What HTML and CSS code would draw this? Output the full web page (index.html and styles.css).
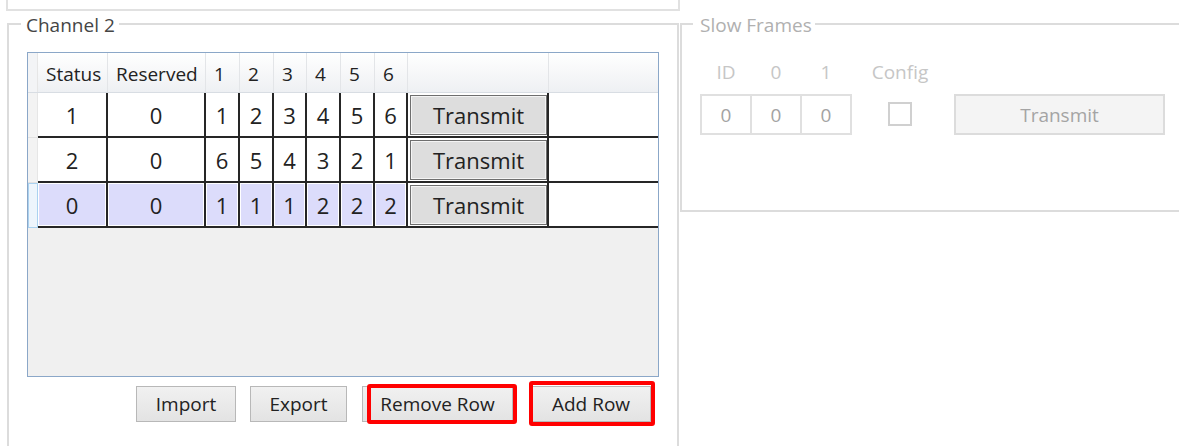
FILE: index.html
```html
<!DOCTYPE html>
<html lang="en">
<head>
<meta charset="utf-8">
<title>Channel 2</title>
<link rel="stylesheet" href="styles.css">
</head>
<body>
<div class="window">
  <div class="top-panel"></div>
  <div class="groups">
    <fieldset class="group channel-group">
      <legend>Channel 2</legend>
      <div class="frame-grid">
        <div class="row head">
          <div class="rh"></div>
          <div class="hc">Status</div>
          <div class="hc">Reserved</div>
          <div class="hc">1</div>
          <div class="hc">2</div>
          <div class="hc">3</div>
          <div class="hc">4</div>
          <div class="hc">5</div>
          <div class="hc">6</div>
          <div class="hc"></div>
          <div class="hc last"></div>
        </div>
        <div class="row data">
          <div class="rh"></div>
          <div class="dc">1</div>
          <div class="dc">0</div>
          <div class="dc">1</div>
          <div class="dc">2</div>
          <div class="dc">3</div>
          <div class="dc">4</div>
          <div class="dc">5</div>
          <div class="dc">6</div>
          <div class="dc btn-cell"><button class="grid-btn">Transmit</button></div>
          <div class="dc filler"></div>
        </div>
        <div class="row data">
          <div class="rh"></div>
          <div class="dc">2</div>
          <div class="dc">0</div>
          <div class="dc">6</div>
          <div class="dc">5</div>
          <div class="dc">4</div>
          <div class="dc">3</div>
          <div class="dc">2</div>
          <div class="dc">1</div>
          <div class="dc btn-cell"><button class="grid-btn">Transmit</button></div>
          <div class="dc filler"></div>
        </div>
        <div class="row data selected">
          <div class="rh"></div>
          <div class="dc">0</div>
          <div class="dc">0</div>
          <div class="dc">1</div>
          <div class="dc">1</div>
          <div class="dc">1</div>
          <div class="dc">2</div>
          <div class="dc">2</div>
          <div class="dc">2</div>
          <div class="dc btn-cell"><button class="grid-btn">Transmit</button></div>
          <div class="dc filler"></div>
        </div>
      </div>
      <div class="actions">
        <button class="btn btn-import">Import</button>
        <button class="btn btn-export">Export</button>
        <span class="mark mark-remove"><button class="btn btn-remove">Remove Row</button></span>
        <span class="mark mark-add"><button class="btn btn-add">Add Row</button></span>
      </div>
    </fieldset>

    <fieldset class="group slow-group">
      <legend>Slow Frames</legend>
      <div class="slow-row">
        <div class="field">
          <span class="field-label">ID</span>
          <span class="field-box">0</span>
        </div>
        <div class="field">
          <span class="field-label">0</span>
          <span class="field-box">0</span>
        </div>
        <div class="field">
          <span class="field-label">1</span>
          <span class="field-box">0</span>
        </div>
        <div class="field config">
          <span class="field-label">Config</span>
          <span class="check"></span>
        </div>
        <button class="slow-transmit" disabled>Transmit</button>
      </div>
    </fieldset>
  </div>
</div>
</body>
</html>
```

FILE: styles.css
```css
html, body {
  margin: 0;
  padding: 0;
  background: #ffffff;
  overflow: hidden;
}

body {
  width: 1179px;
  height: 446px;
  font-family: "Open Sans", "Noto Sans", sans-serif;
  font-size: 19px;
  color: #222222;
}

button {
  font-family: "Open Sans", "Noto Sans", sans-serif;
}

/* strip of the panel above the groups */
.top-panel {
  margin-left: 6px;
  width: 670px;
  height: 9px;
  border: 2px solid #e1e1e1;
  border-top: none;
}

.groups {
  display: flex;
  align-items: flex-start;
  margin-top: -2px;
  padding-left: 7px;
}

.group {
  margin: 0;
  min-width: 0;
  flex-shrink: 0;
  box-sizing: border-box;
  border: 2px solid #dcdcdc;
}

.group legend {
  font-size: 19px;
  line-height: 25px;
  padding-top: 4px;
}

/* Channel 2 group */
.channel-group {
  width: 672px;
  padding: 14px 0 40px 18px;
}

.channel-group legend {
  padding-left: 5px;
  padding-right: 4px;
  margin-left: -6px;
  color: #454545;
}

.frame-grid {
  width: 632px;
  height: 325px;
  box-sizing: border-box;
  border: 1px solid #8ba7c8;
  background: #f0f0f0;
}

.row {
  display: grid;
  grid-template-columns: 10px 70px 98px 34px 34px 33px 34px 34px 33px 141px 1fr;
}

.row.head {
  height: 40px;
  box-sizing: border-box;
  background: linear-gradient(#ffffff, #eef0f3);
  border-bottom: 1px solid #d8dde3;
}

.hc {
  display: flex;
  align-items: center;
  padding: 3px 0 0 8px;
  border-right: 1px solid #e3e5e8;
  white-space: nowrap;
  font-size: 19px;
  color: #222222;
}

.hc.last {
  border-right: none;
}

.row.head .rh {
  background: #f3f4f6;
  border-bottom: none;
}

.row.data {
  height: 45px;
}

.rh {
  box-sizing: border-box;
  background: #f3f3f3;
  border-right: 1px solid #e6e6e6;
  border-bottom: 1px solid #e2e2e2;
}

.dc {
  display: flex;
  align-items: center;
  justify-content: center;
  box-sizing: border-box;
  background: #ffffff;
  border-right: 2px solid #262626;
  border-bottom: 2px solid #262626;
  font-size: 22px;
  color: #222222;
}

.dc.filler {
  border-right: none;
}

.dc.btn-cell {
  padding: 2px 0 1px 2px;
  align-items: stretch;
  justify-content: stretch;
}

.grid-btn {
  width: 100%;
  padding: 0;
  border: 1px solid #6e6e6e;
  box-shadow: inset 0 0 0 1px #f4f4f4;
  background: #dddddd;
  font-size: 22px;
  color: #222222;
}

.row.selected .dc:not(.btn-cell):not(.filler) {
  background: #dcdcfb;
  box-shadow: inset 0 0 0 1px #ffffff;
}

.row.selected .rh {
  background: #edf5fc;
  border: 1px solid #aad2f0;
}

/* buttons under the grid */
.actions {
  display: flex;
  margin-top: 9px;
  padding-left: 109px;
}

.btn {
  height: 36px;
  padding: 0;
  box-sizing: border-box;
  border: 1px solid #b8b8b8;
  background: linear-gradient(#f1f1f1, #e3e3e3);
  font-size: 19px;
  color: #222222;
}

.btn-import { width: 100px; }
.btn-export { width: 97px; margin-left: 14px; }
.btn-remove { width: 151px; }
.btn-add { width: 120px; }

.mark {
  position: relative;
  display: flex;
}

.mark-remove { margin-left: 15px; }
.mark-add { margin-left: 18px; }

.mark::after {
  content: "";
  position: absolute;
  border: 4px solid #ff0000;
  border-radius: 3px;
}

.mark-remove::after {
  left: 5px;
  right: -4px;
  top: -2px;
  bottom: -2px;
}

.mark-add::after {
  left: -2px;
  right: -4px;
  top: -5px;
  bottom: -4px;
}

/* Slow Frames group (disabled) */
.slow-group {
  margin-left: 1px;
  width: 540px;
  height: 203px;
  padding: 22px 0 0 18px;
}

.slow-group legend {
  padding-left: 7px;
  padding-right: 3px;
  margin-left: -7px;
  color: #b0b0b0;
}

.slow-row {
  display: flex;
  align-items: flex-end;
}

.field {
  display: flex;
  flex-direction: column;
  align-items: center;
  width: 52px;
}

.field + .field {
  margin-left: -2px;
}

.field-label {
  height: 25px;
  line-height: 25px;
  margin-bottom: 9px;
  font-size: 19px;
  color: #c6c6c6;
}

.field-box {
  display: flex;
  align-items: center;
  justify-content: center;
  width: 52px;
  height: 41px;
  box-sizing: border-box;
  border: 2px solid #e0e0e0;
  font-size: 19px;
  color: #a3a3a3;
}

.field.config {
  width: 58px;
  margin-left: 19px;
}

.check {
  width: 24px;
  height: 24px;
  box-sizing: border-box;
  border: 2px solid #d0d0d0;
  margin: 8px 0 9px;
}

.slow-transmit {
  margin-left: 25px;
  width: 211px;
  height: 41px;
  padding: 0;
  box-sizing: border-box;
  border: 2px solid #dcdcdc;
  background: #f4f4f4;
  font-size: 19px;
  color: #a4a4a4;
}
```
